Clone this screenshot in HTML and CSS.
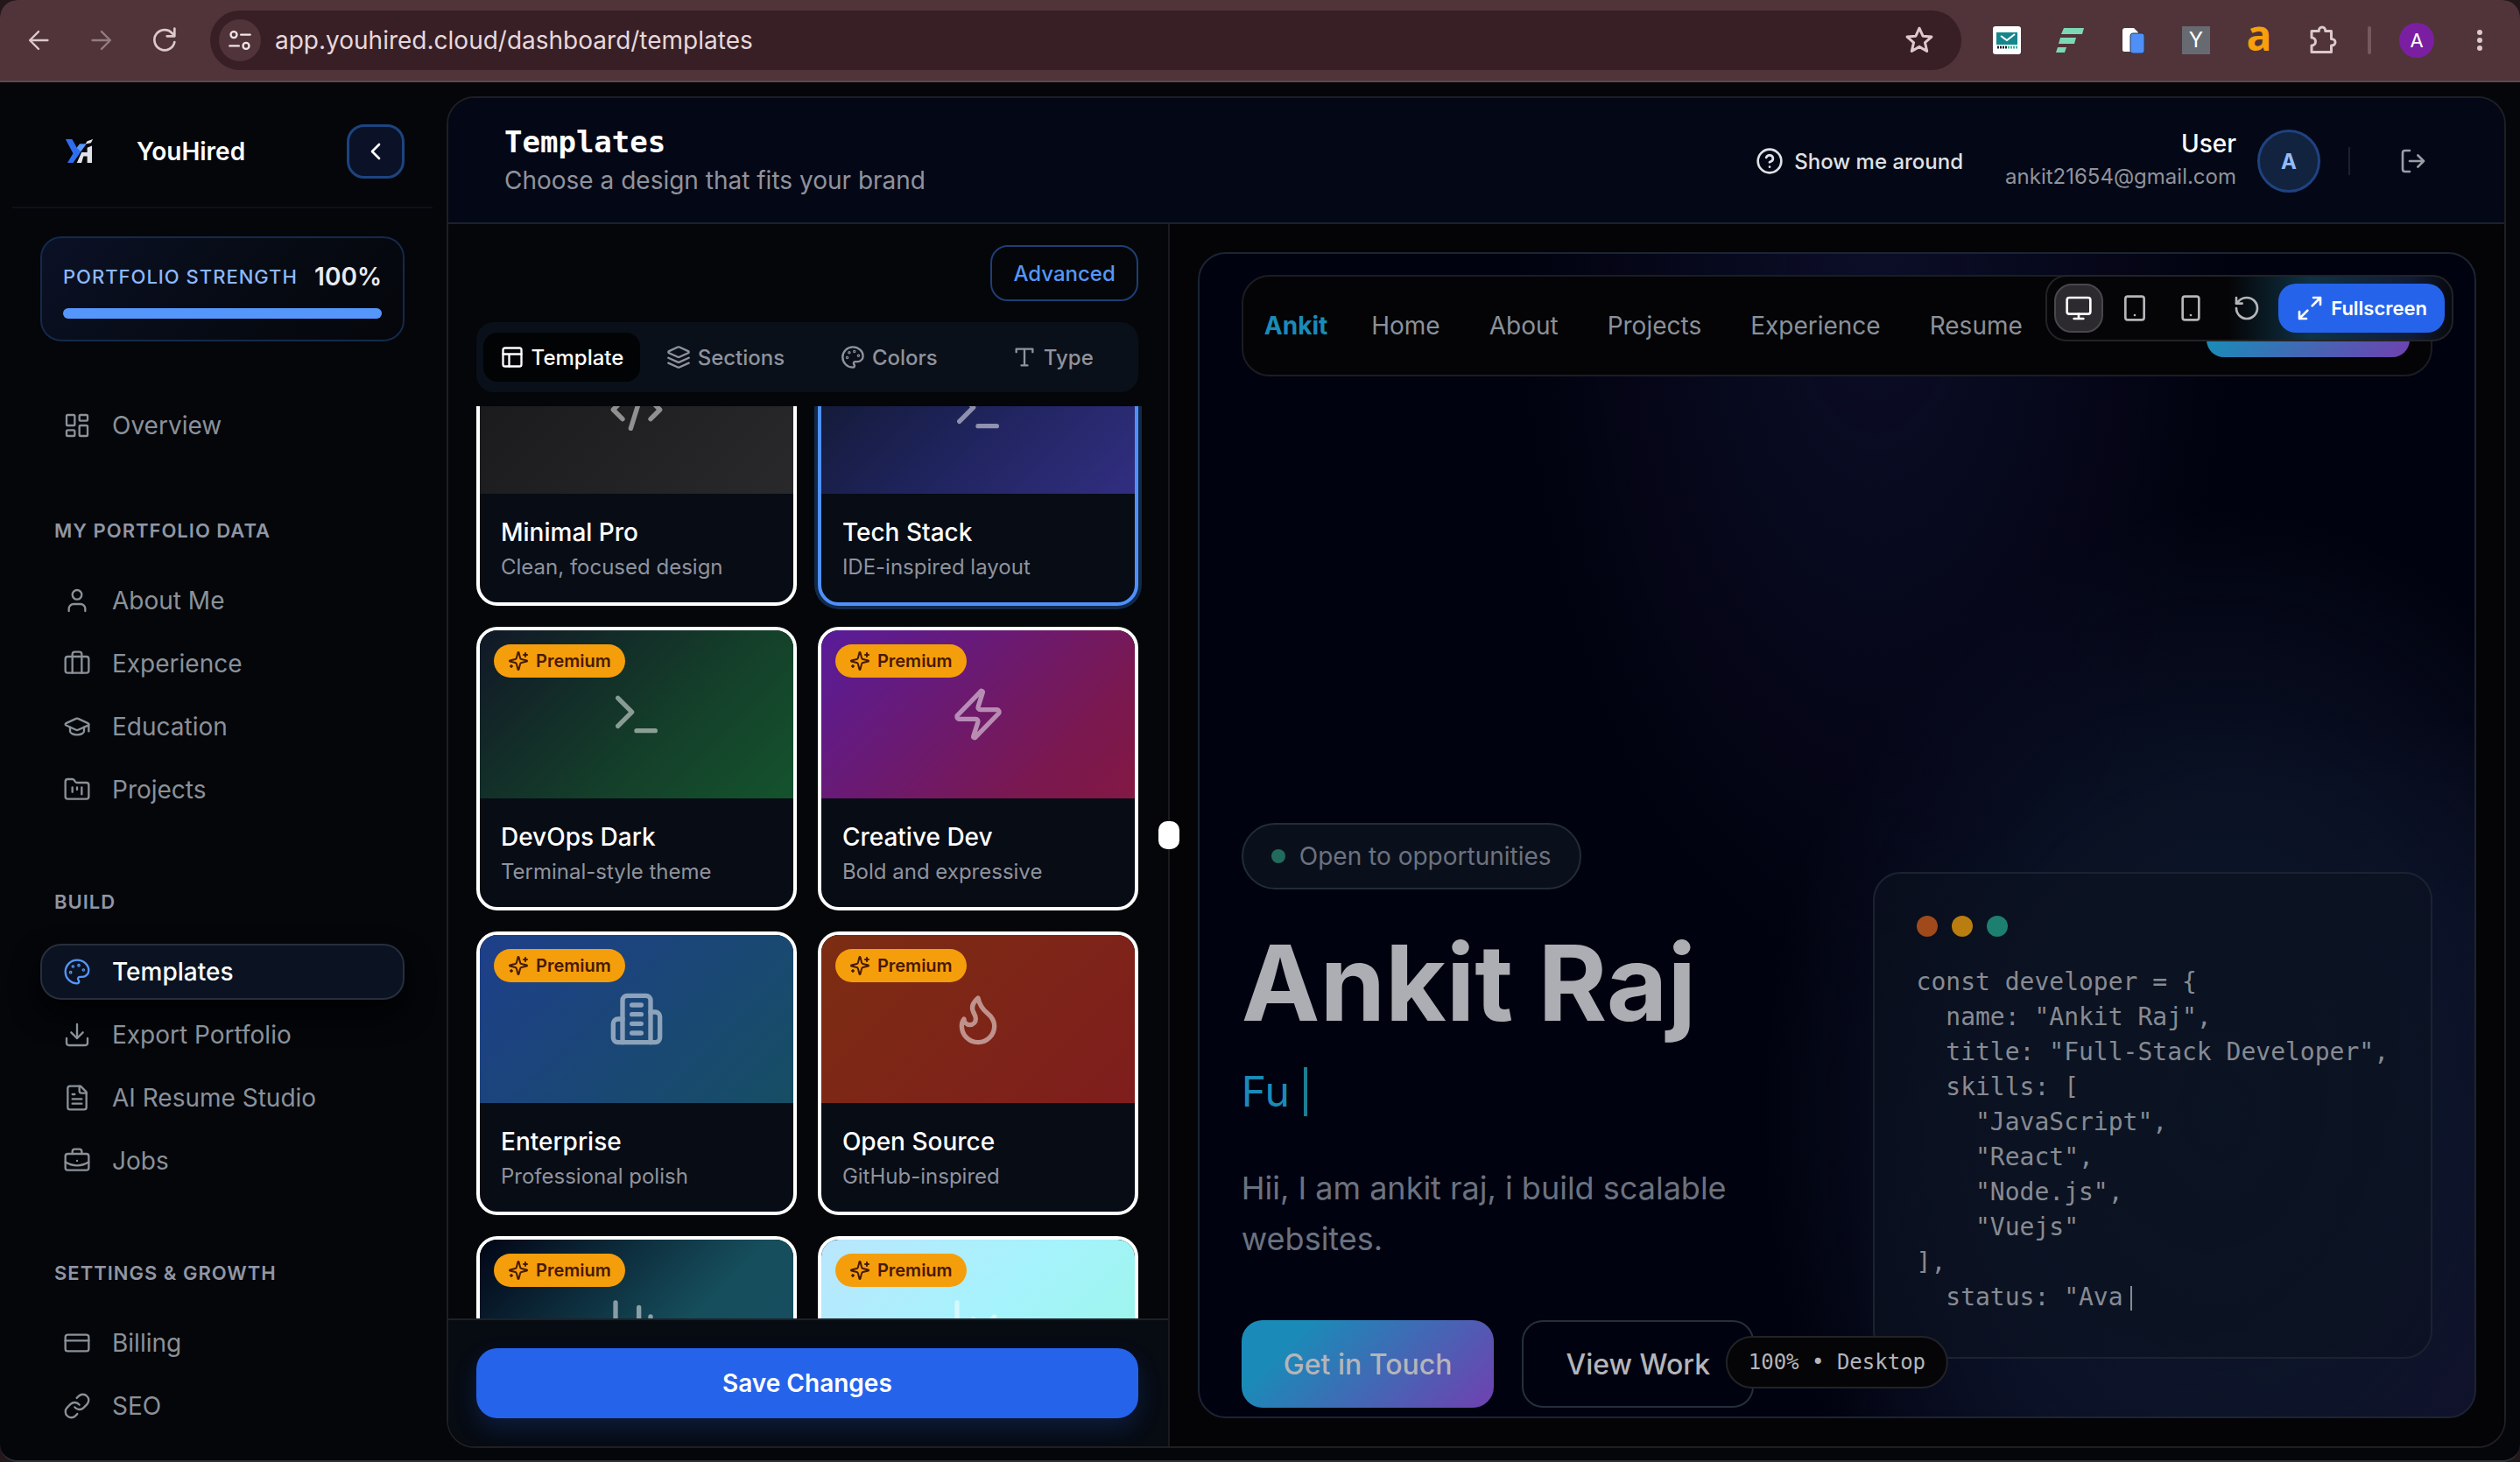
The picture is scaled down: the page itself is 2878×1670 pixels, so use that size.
FILE: index.html
```html
<!DOCTYPE html>
<html lang="en">
<head>
    <meta charset="UTF-8">
    <meta name="viewport" content="width=device-width, initial-scale=1.0">
    <title>YouHired - Templates</title>
    <link rel="stylesheet" href="styles.css">
</head>
<body>
    <!-- Icon sprite -->
    <svg class="sprite" aria-hidden="true">
        <symbol id="i-back" viewBox="0 0 24 24"><path d="M21 12H4M12 3.500l-8.500 8.500 8.500 8.500"/></symbol>
        <symbol id="i-forward" viewBox="0 0 24 24"><path d="M3 12h17M12 3.500l8.500 8.500-8.500 8.500"/></symbol>
        <symbol id="i-reload" viewBox="0 0 24 24"><path d="M20.500 13.500A8.700 8.700 0 1 1 18.500 6l2 2.500M20.500 2v6.500H14"/></symbol>
        <symbol id="i-tune" viewBox="0 0 24 24"><circle cx="6" cy="6.500" r="3"/><path d="M13 6.500h9M2 17.500h9"/><circle cx="18" cy="17.500" r="3"/></symbol>
        <symbol id="i-star" viewBox="0 0 24 24"><path d="M12 2.800l2.700 6 6.600.6-5 4.400 1.500 6.500L12 16.900l-5.800 3.400 1.500-6.500-5-4.400 6.600-.6z"/></symbol>
        <symbol id="i-puzzle" viewBox="0 0 24 24"><path d="M4 5h5.500c0-4 5-4 5 0H19v6c4 0 4 5 0 5v5H4v-5c4 0 4-6 0-6z"/></symbol>
        <symbol id="i-chevron-left" viewBox="0 0 24 24"><path d="m15 18-6-6 6-6"/></symbol>
        <symbol id="i-dashboard" viewBox="0 0 24 24"><rect x="3" y="3" width="7" height="9" rx="1"/><rect x="14" y="3" width="7" height="5" rx="1"/><rect x="14" y="12" width="7" height="9" rx="1"/><rect x="3" y="16" width="7" height="5" rx="1"/></symbol>
        <symbol id="i-user" viewBox="0 0 24 24"><path d="M19 21v-2a4 4 0 0 0-4-4H9a4 4 0 0 0-4 4v2"/><circle cx="12" cy="7" r="4"/></symbol>
        <symbol id="i-briefcase" viewBox="0 0 24 24"><path d="M16 20V4a2 2 0 0 0-2-2h-4a2 2 0 0 0-2 2v16"/><rect x="2" y="6" width="20" height="14" rx="2"/></symbol>
        <symbol id="i-cap" viewBox="0 0 24 24"><path d="M21.420 10.922a1 1 0 0 0-.019-1.838L12.830 5.180a2 2 0 0 0-1.660 0L2.600 9.080a1 1 0 0 0 0 1.832l8.570 3.908a2 2 0 0 0 1.660 0z"/><path d="M22 10v6"/><path d="M6 12.500V16a6 3 0 0 0 12 0v-3.500"/></symbol>
        <symbol id="i-folder" viewBox="0 0 24 24"><path d="M4 20h16a2 2 0 0 0 2-2V8a2 2 0 0 0-2-2h-7.930a2 2 0 0 1-1.660-.9l-.82-1.200A2 2 0 0 0 7.930 3H4a2 2 0 0 0-2 2v13c0 1.100.9 2 2 2Z"/><path d="M8 10v4M12 10v2M16 10v6"/></symbol>
        <symbol id="i-palette" viewBox="0 0 24 24"><path d="M12 2C6.500 2 2 6.500 2 12s4.500 10 10 10c.926 0 1.648-.746 1.648-1.688 0-.437-.18-.835-.437-1.125-.29-.289-.438-.652-.438-1.125a1.640 1.640 0 0 1 1.668-1.668h1.996c3.051 0 5.555-2.503 5.555-5.554C21.965 6.012 17.461 2 12 2z"/><circle cx="13.500" cy="6.500" r=".5"/><circle cx="17.500" cy="10.500" r=".5"/><circle cx="8.500" cy="7.500" r=".5"/><circle cx="6.500" cy="12.500" r=".5"/></symbol>
        <symbol id="i-download" viewBox="0 0 24 24"><path d="M12 15V3"/><path d="M21 15v4a2 2 0 0 1-2 2H5a2 2 0 0 1-2-2v-4"/><path d="m7 10 5 5 5-5"/></symbol>
        <symbol id="i-file" viewBox="0 0 24 24"><path d="M15 2H6a2 2 0 0 0-2 2v16a2 2 0 0 0 2 2h12a2 2 0 0 0 2-2V7Z"/><path d="M14 2v4a2 2 0 0 0 2 2h4M10 9H8M16 13H8M16 17H8"/></symbol>
        <symbol id="i-jobs" viewBox="0 0 24 24"><path d="M12 12h.01M16 6V4a2 2 0 0 0-2-2h-4a2 2 0 0 0-2 2v2M22 13a18.150 18.150 0 0 1-20 0"/><rect x="2" y="6" width="20" height="14" rx="2"/></symbol>
        <symbol id="i-card" viewBox="0 0 24 24"><rect x="2" y="5" width="20" height="14" rx="2"/><path d="M2 10h20"/></symbol>
        <symbol id="i-link" viewBox="0 0 24 24"><path d="M10 13a5 5 0 0 0 7.540.54l3-3a5 5 0 0 0-7.070-7.070l-1.720 1.710"/><path d="M14 11a5 5 0 0 0-7.540-.54l-3 3a5 5 0 0 0 7.070 7.070l1.710-1.710"/></symbol>
        <symbol id="i-help" viewBox="0 0 24 24"><circle cx="12" cy="12" r="10"/><path d="M9.090 9a3 3 0 0 1 5.830 1c0 2-3 3-3 3M12 17h.01"/></symbol>
        <symbol id="i-logout" viewBox="0 0 24 24"><path d="m16 17 5-5-5-5M21 12H9M9 21H5a2 2 0 0 1-2-2V5a2 2 0 0 1 2-2h4"/></symbol>
        <symbol id="i-layout" viewBox="0 0 24 24"><rect x="3" y="3" width="18" height="18" rx="2"/><path d="M3 9h18M9 21V9"/></symbol>
        <symbol id="i-layers" viewBox="0 0 24 24"><path d="M12.830 2.180a2 2 0 0 0-1.660 0L2.600 6.080a1 1 0 0 0 0 1.830l8.580 3.910a2 2 0 0 0 1.660 0l8.580-3.900a1 1 0 0 0 0-1.830Z"/><path d="m22 17.650-9.170 4.160a2 2 0 0 1-1.660 0L2 17.650M22 12.650l-9.170 4.160a2 2 0 0 1-1.660 0L2 12.650"/></symbol>
        <symbol id="i-type" viewBox="0 0 24 24"><path d="M4 7V4h16v3M9 20h6M12 4v16"/></symbol>
        <symbol id="i-code" viewBox="0 0 24 24"><path d="m18 16 4-4-4-4M6 8l-4 4 4 4M14.500 4l-5 16"/></symbol>
        <symbol id="i-terminal" viewBox="0 0 24 24"><path d="m4 17 6-6-6-6M12 19h8"/></symbol>
        <symbol id="i-zap" viewBox="0 0 24 24"><path d="M4 14a1 1 0 0 1-.78-1.630l9.900-10.200a.5.5 0 0 1 .86.46l-1.920 6.020A1 1 0 0 0 13 10h7a1 1 0 0 1 .78 1.630l-9.900 10.200a.5.5 0 0 1-.86-.46l1.920-6.020A1 1 0 0 0 11 14z"/></symbol>
        <symbol id="i-building" viewBox="0 0 24 24"><path d="M6 22V4a2 2 0 0 1 2-2h8a2 2 0 0 1 2 2v18Z"/><path d="M6 12H4a2 2 0 0 0-2 2v6a2 2 0 0 0 2 2h2M18 9h2a2 2 0 0 1 2 2v9a2 2 0 0 1-2 2h-2M10 6h4M10 10h4M10 14h4M10 18h4"/></symbol>
        <symbol id="i-flame" viewBox="0 0 24 24"><path d="M8.500 14.500A2.500 2.500 0 0 0 11 12c0-1.380-.5-2-1-3-1.072-2.143-.224-4.054 2-6 .5 2.500 2 4.900 4 6.500 2 1.600 3 3.500 3 5.500a7 7 0 1 1-14 0c0-1.153.433-2.294 1-3a2.500 2.500 0 0 0 2.500 2.500z"/></symbol>
        <symbol id="i-chart" viewBox="0 0 24 24"><path d="M3 3v16a2 2 0 0 0 2 2h16M18 17V9M13 17V5M8 17v-3"/></symbol>
        <symbol id="i-line" viewBox="0 0 24 24"><path d="M3 3v16a2 2 0 0 0 2 2h16M19 9l-5 5-4-4-3 3"/></symbol>
        <symbol id="i-sparkles" viewBox="0 0 24 24"><path d="M9.937 15.500A2 2 0 0 0 8.500 14.063l-6.135-1.582a.5.5 0 0 1 0-.962L8.500 9.936A2 2 0 0 0 9.937 8.500l1.582-6.135a.5.5 0 0 1 .963 0L14.063 8.500A2 2 0 0 0 15.500 9.937l6.135 1.581a.5.5 0 0 1 0 .964L15.500 14.063a2 2 0 0 0-1.437 1.437l-1.582 6.135a.5.5 0 0 1-.963 0zM20 3v4M22 5h-4M4 17v2M5 18H3"/></symbol>
        <symbol id="i-monitor" viewBox="0 0 24 24"><rect x="2" y="3" width="20" height="14" rx="2"/><path d="M8 21h8M12 17v4"/></symbol>
        <symbol id="i-tablet" viewBox="0 0 24 24"><rect x="4" y="2" width="16" height="20" rx="2"/><path d="M12 18h.01"/></symbol>
        <symbol id="i-phone" viewBox="0 0 24 24"><rect x="5" y="2" width="14" height="20" rx="2"/><path d="M12 18h.01"/></symbol>
        <symbol id="i-reset" viewBox="0 0 24 24"><path d="M3 12a9 9 0 1 0 9-9 9.750 9.750 0 0 0-6.740 2.740L3 8"/><path d="M3 3v5h5"/></symbol>
        <symbol id="i-expand" viewBox="0 0 24 24"><path d="M15 3h6v6M21 3l-7 7M3 21l7-7M9 21H3v-6"/></symbol>
    </svg>

    <div class="window">
        <!-- Browser toolbar -->
        <div class="browser-bar">
            <button class="bar-btn" aria-label="Back"><svg class="icon icon-28"><use href="#i-back"/></svg></button>
            <button class="bar-btn dim" aria-label="Forward"><svg class="icon icon-28"><use href="#i-forward"/></svg></button>
            <button class="bar-btn" aria-label="Reload"><svg class="icon icon-32"><use href="#i-reload"/></svg></button>
            <div class="url-bar">
                <button class="site-info" aria-label="Site information"><svg class="icon icon-28"><use href="#i-tune"/></svg></button>
                <input class="url-input" type="text" aria-label="Address" value="app.youhired.cloud/dashboard/templates">
                <button class="star-btn" aria-label="Bookmark"><svg class="icon icon-36"><use href="#i-star"/></svg></button>
            </div>
            <button class="bar-btn" aria-label="Temp Mail">
                <svg class="icon-32" viewBox="0 0 32 32"><rect width="32" height="32" rx="3" fill="#fff"/><rect x="4" y="7" width="24" height="14" fill="#15868c"/><path d="M9 11l7 5 9-7" fill="none" stroke="#fff" stroke-width="2"/><path d="M5 24h12" stroke="#222" stroke-width="3" stroke-dasharray="2 1"/><path d="M17 24h11" stroke="#3bb79a" stroke-width="3" stroke-dasharray="2 1"/></svg>
            </button>
            <button class="bar-btn" aria-label="Form filler">
                <svg class="icon-32" viewBox="0 0 32 32" fill="#7dd8b5"><path d="M9 2h23l-2 7H6zM5 13h18l-2 7H3zM2 24h10l-2 6H0z"/></svg>
            </button>
            <button class="bar-btn" aria-label="Copy tool">
                <svg class="icon-32" viewBox="0 0 32 32"><path d="M4 5a3 3 0 0 1 3-3h10l5 5v22H6a2 2 0 0 1-2-2z" fill="#fff"/><rect x="13" y="8" width="16" height="23" rx="3" fill="#4f8ff7" stroke="#2b3d57" stroke-width="1"/></svg>
            </button>
            <button class="bar-btn" aria-label="Y extension"><span class="ext-y">Y</span></button>
            <button class="bar-btn" aria-label="a extension"><span class="ext-a">a</span></button>
            <button class="bar-btn" aria-label="Extensions"><svg class="icon icon-36"><use href="#i-puzzle"/></svg></button>
            <span class="bar-divider"></span>
            <button class="bar-btn" aria-label="Profile"><span class="profile">A</span></button>
            <button class="bar-btn" aria-label="Menu"><svg class="icon-28" viewBox="0 0 28 28" fill="#dcc8cd"><circle cx="14" cy="5" r="3"/><circle cx="14" cy="14" r="3"/><circle cx="14" cy="23" r="3"/></svg></button>
        </div>

        <div class="app">
            <aside class="sidebar">
                <div class="brand">
                    <svg class="logo" viewBox="0 0 30 26" aria-hidden="true">
                        <path d="M0 0h7l5 9 3-4h7L8 25H2l6-10z" fill="#2f6df0"/>
                        <path d="M12 9l3-4h7l-6 8z" fill="#5b9bf8"/>
                        <path d="M17 14h6v-5l5-2v18h-5v-7h-4l-2 7h-5zM23 2l6-2-2 4-6 1z" fill="#dfe2ea"/>
                    </svg>
                    <span class="brand-name">YouHired</span>
                    <button class="collapse" aria-label="Collapse sidebar"><svg class="icon icon-32"><use href="#i-chevron-left"/></svg></button>
                </div>

                <div class="sidebar-body">
                    <div class="strength">
                        <div class="strength-row">
                            <span class="strength-label">PORTFOLIO STRENGTH</span>
                            <span class="strength-value">100%</span>
                        </div>
                        <div class="strength-bar"><div class="strength-fill" style="width: 100%"></div></div>
                    </div>

                    <nav class="nav">
                        <a href="#" class="nav-item"><svg class="icon icon-32"><use href="#i-dashboard"/></svg>Overview</a>

                        <h2 class="nav-title first">MY PORTFOLIO DATA</h2>
                        <a href="#" class="nav-item"><svg class="icon icon-32"><use href="#i-user"/></svg>About Me</a>
                        <a href="#" class="nav-item"><svg class="icon icon-32"><use href="#i-briefcase"/></svg>Experience</a>
                        <a href="#" class="nav-item"><svg class="icon icon-32"><use href="#i-cap"/></svg>Education</a>
                        <a href="#" class="nav-item"><svg class="icon icon-32"><use href="#i-folder"/></svg>Projects</a>

                        <h2 class="nav-title">BUILD</h2>
                        <a href="#" class="nav-item active"><svg class="icon icon-32"><use href="#i-palette"/></svg>Templates</a>
                        <a href="#" class="nav-item"><svg class="icon icon-32"><use href="#i-download"/></svg>Export Portfolio</a>
                        <a href="#" class="nav-item"><svg class="icon icon-32"><use href="#i-file"/></svg>AI Resume Studio</a>
                        <a href="#" class="nav-item"><svg class="icon icon-32"><use href="#i-jobs"/></svg>Jobs</a>

                        <h2 class="nav-title">SETTINGS &amp; GROWTH</h2>
                        <a href="#" class="nav-item"><svg class="icon icon-32"><use href="#i-card"/></svg>Billing</a>
                        <a href="#" class="nav-item"><svg class="icon icon-32"><use href="#i-link"/></svg>SEO</a>
                    </nav>
                </div>
            </aside>

            <main class="main">
                <header class="header">
                    <div class="header-text">
                        <h1>Templates</h1>
                        <p>Choose a design that fits your brand</p>
                    </div>
                    <button class="tour"><svg class="icon icon-32"><use href="#i-help"/></svg>Show me around</button>
                    <div class="user">
                        <div class="user-text">
                            <span class="user-name">User</span>
                            <span class="user-mail">ankit21654@gmail.com</span>
                        </div>
                        <span class="avatar">A</span>
                    </div>
                    <span class="header-divider"></span>
                    <button class="logout" aria-label="Log out"><svg class="icon icon-32"><use href="#i-logout"/></svg></button>
                </header>

                <div class="workspace">
                    <section class="editor">
                        <div class="editor-top">
                            <button class="advanced">Advanced</button>
                            <div class="tabs">
                                <button class="tab active"><svg class="icon icon-28"><use href="#i-layout"/></svg>Template</button>
                                <button class="tab"><svg class="icon icon-28"><use href="#i-layers"/></svg>Sections</button>
                                <button class="tab"><svg class="icon icon-28"><use href="#i-palette"/></svg>Colors</button>
                                <button class="tab"><svg class="icon icon-28"><use href="#i-type"/></svg>Type</button>
                            </div>
                        </div>

                        <div class="template-list">
                            <div class="template-grid">
                                <article class="card">
                                    <div class="thumb minimal"><svg class="icon icon-64"><use href="#i-code"/></svg></div>
                                    <div class="card-body"><h3>Minimal Pro</h3><p>Clean, focused design</p></div>
                                </article>
                                <article class="card selected">
                                    <div class="thumb tech"><svg class="icon icon-64"><use href="#i-terminal"/></svg></div>
                                    <div class="card-body"><h3>Tech Stack</h3><p>IDE-inspired layout</p></div>
                                </article>
                                <article class="card">
                                    <div class="thumb devops"><svg class="icon icon-64"><use href="#i-terminal"/></svg></div>
                                    <span class="premium"><svg class="icon icon-24"><use href="#i-sparkles"/></svg>Premium</span>
                                    <div class="card-body"><h3>DevOps Dark</h3><p>Terminal-style theme</p></div>
                                </article>
                                <article class="card">
                                    <div class="thumb creative"><svg class="icon icon-64"><use href="#i-zap"/></svg></div>
                                    <span class="premium"><svg class="icon icon-24"><use href="#i-sparkles"/></svg>Premium</span>
                                    <div class="card-body"><h3>Creative Dev</h3><p>Bold and expressive</p></div>
                                </article>
                                <article class="card">
                                    <div class="thumb enterprise"><svg class="icon icon-64"><use href="#i-building"/></svg></div>
                                    <span class="premium"><svg class="icon icon-24"><use href="#i-sparkles"/></svg>Premium</span>
                                    <div class="card-body"><h3>Enterprise</h3><p>Professional polish</p></div>
                                </article>
                                <article class="card">
                                    <div class="thumb opensource"><svg class="icon icon-64"><use href="#i-flame"/></svg></div>
                                    <span class="premium"><svg class="icon icon-24"><use href="#i-sparkles"/></svg>Premium</span>
                                    <div class="card-body"><h3>Open Source</h3><p>GitHub-inspired</p></div>
                                </article>
                                <article class="card">
                                    <div class="thumb data"><svg class="icon icon-64"><use href="#i-chart"/></svg></div>
                                    <span class="premium"><svg class="icon icon-24"><use href="#i-sparkles"/></svg>Premium</span>
                                </article>
                                <article class="card">
                                    <div class="thumb light"><svg class="icon icon-64"><use href="#i-line"/></svg></div>
                                    <span class="premium"><svg class="icon icon-24"><use href="#i-sparkles"/></svg>Premium</span>
                                </article>
                            </div>
                        </div>

                        <div class="save-bar">
                            <button class="save">Save Changes</button>
                        </div>
                    </section>

                    <div class="splitter"><span class="grip"></span></div>

                    <section class="stage">
                        <div class="preview">
                            <nav class="site-nav">
                                <a href="#" class="site-logo">Ankit</a>
                                <a href="#">Home</a>
                                <a href="#">About</a>
                                <a href="#">Projects</a>
                                <a href="#">Experience</a>
                                <a href="#">Resume</a>
                                <span class="site-cta"></span>
                            </nav>

                            <div class="hero">
                                <div class="hero-text">
                                    <span class="status"><span class="status-dot"></span>Open to opportunities</span>
                                    <h2>Ankit Raj</h2>
                                    <div class="typed">Fu<span class="cursor"></span></div>
                                    <p>Hii, I am ankit raj, i build scalable websites.</p>
                                    <div class="hero-actions">
                                        <a href="#" class="hero-btn primary">Get in Touch</a>
                                        <a href="#" class="hero-btn">View Work</a>
                                    </div>
                                </div>
                                <div class="code-card">
                                    <div class="dots"><span class="dot red"></span><span class="dot amber"></span><span class="dot green"></span></div>
<pre>const developer = {
  name: "Ankit Raj",
  title: "Full-Stack Developer",
  skills: [
    "JavaScript",
    "React",
    "Node.js",
    "Vuejs"
],
  status: "Ava<span class="code-cursor"></span></pre>
                                </div>
                            </div>

                            <div class="device-bar">
                                <button class="device active" aria-label="Desktop"><svg class="icon icon-32"><use href="#i-monitor"/></svg></button>
                                <button class="device" aria-label="Tablet"><svg class="icon icon-32"><use href="#i-tablet"/></svg></button>
                                <button class="device" aria-label="Mobile"><svg class="icon icon-32"><use href="#i-phone"/></svg></button>
                                <button class="device" aria-label="Reset"><svg class="icon icon-32"><use href="#i-reset"/></svg></button>
                                <button class="fullscreen"><svg class="icon icon-32"><use href="#i-expand"/></svg>Fullscreen</button>
                            </div>
                            <div class="zoom-pill">100% • Desktop</div>
                        </div>
                    </section>
                </div>
            </main>
        </div>
    </div>
</body>
</html>
```
FILE: styles.css
```css
* {
    box-sizing: border-box;
    margin: 0;
    padding: 0;
}
body {
    font-family: Inter, "Liberation Sans", sans-serif;
    font-size: 28px;
    color: #fff;
    background: #23171a;
    height: 100vh;
    overflow: hidden;
}
button, input {
    font: inherit;
    color: inherit;
    background: none;
    border: none;
}
button {
    cursor: pointer;
}
a {
    color: inherit;
    text-decoration: none;
}
.sprite {
    display: none;
}
.icon {
    fill: none;
    stroke: currentColor;
    stroke-width: 2;
    stroke-linecap: round;
    stroke-linejoin: round;
    flex: none;
}
.icon-24 { width: 24px; height: 24px; }
.icon-28 { width: 28px; height: 28px; }
.icon-32 { width: 32px; height: 32px; }
.icon-36 { width: 36px; height: 36px; }
.icon-64 { width: 64px; height: 64px; }

.window {
    display: flex;
    flex-direction: column;
    height: 100vh;
    background: #04060a;
    border-bottom: 2px solid #303238;
    border-radius: 20px;
    overflow: hidden;
}

/* Browser toolbar */
.browser-bar {
    display: flex;
    align-items: center;
    flex: none;
    height: 94px;
    padding: 0 10px 0 8px;
    background: #503439;
    border-bottom: 2px solid #5a4a4e;
    color: #dcc8cd;
}
.bar-btn {
    width: 72px;
    height: 72px;
    display: flex;
    align-items: center;
    justify-content: center;
}
.bar-btn.dim {
    color: #927c80;
}
.url-bar {
    flex: 1;
    height: 68px;
    margin: 0 16px;
    padding: 0 24px 0 10px;
    display: flex;
    align-items: center;
    gap: 16px;
    background: #371f25;
    border-radius: 34px;
}
.site-info {
    width: 48px;
    height: 48px;
    border-radius: 50%;
    background: #503439;
    color: #f0e4e7;
    display: flex;
    align-items: center;
    justify-content: center;
}
.url-input {
    flex: 1;
    color: #e6d8dc;
    outline: none;
}
.star-btn {
    width: 48px;
    height: 48px;
    display: flex;
    align-items: center;
    justify-content: center;
}
.ext-y {
    width: 32px;
    height: 32px;
    line-height: 32px;
    font-size: 24px;
    background: #686a72;
    color: #fff;
}
.ext-a {
    font-family: "Open Sans", sans-serif;
    font-size: 48px;
    font-weight: 700;
    line-height: 32px;
    padding-bottom: 12px;
    color: #f79f0d;
}
.bar-divider {
    width: 4px;
    height: 32px;
    margin: 0 16px;
    background: #76595f;
    border-radius: 2px;
}
.profile {
    width: 40px;
    height: 40px;
    line-height: 40px;
    border-radius: 50%;
    background: #7b1fa2;
    color: #fff;
    font-size: 22px;
}

/* App layout */
.app {
    flex: 1;
    display: flex;
    min-height: 0;
}
.sidebar {
    width: 510px;
    flex: none;
    overflow: hidden;
}
.brand {
    display: flex;
    align-items: center;
    gap: 20px;
    margin: 0 16px 0 14px;
    padding: 48px 32px 32px;
    border-bottom: 2px solid #0c111b;
}
.logo {
    width: 90px;
    height: 28px;
}
.brand-name {
    flex: 1;
    font-weight: 600;
}
.collapse {
    width: 66px;
    height: 62px;
    border: 3px solid #1c4480;
    border-radius: 20px;
    background: #0b1126;
    display: flex;
    align-items: center;
    justify-content: center;
}
.sidebar-body {
    padding: 32px 48px 0 46px;
}
.strength {
    padding: 24px;
    border: 2px solid #142a4a;
    border-radius: 24px;
    background: linear-gradient(135deg, #0b1126, #060a12 60%, #04060a);
}
.strength-row {
    display: flex;
    justify-content: space-between;
    align-items: center;
    height: 40px;
    margin-bottom: 16px;
}
.strength-label {
    font-size: 22px;
    font-weight: 500;
    letter-spacing: 1px;
    color: #8fb8fa;
}
.strength-value {
    font-weight: 600;
    color: #e8eaf0;
}
.strength-bar {
    height: 12px;
    border-radius: 6px;
    background: #111827;
}
.strength-fill {
    height: 100%;
    border-radius: 6px;
    background: #5596fb;
}
.nav {
    display: flex;
    flex-direction: column;
    gap: 8px;
    padding-top: 64px;
}
.nav-item {
    display: flex;
    align-items: center;
    gap: 24px;
    height: 64px;
    padding: 0 24px;
    border: 2px solid transparent;
    border-radius: 24px;
    color: #8b9199;
}
.nav-item .icon {
    stroke-width: 1.75;
}
.nav-item.active {
    color: #fff;
    font-weight: 500;
    background: #0b1322;
    border-color: #272f3c;
    box-shadow: 0 16px 32px #020203;
}
.nav-item.active .icon {
    color: #5596fb;
}
.nav-title {
    margin: 72px 0 24px;
    padding-left: 16px;
    font-size: 22px;
    font-weight: 600;
    line-height: 32px;
    letter-spacing: 1px;
    color: #9096a5;
}
.nav-title.first {
    margin-top: 64px;
}

.main {
    flex: 1;
    min-width: 0;
    display: flex;
    flex-direction: column;
    margin: 16px 16px 14px 0;
    border: 2px solid #1e1f24;
    border-radius: 32px;
    overflow: hidden;
}
.header {
    display: flex;
    align-items: center;
    flex: none;
    height: 144px;
    padding: 2px 64px 0;
    background: #040816;
    border-bottom: 2px solid #1a2230;
}
.header-text {
    flex: 1;
}
.header h1 {
    font-family: "DejaVu Sans Mono", "Liberation Mono", monospace;
    font-size: 34px;
    line-height: 44px;
}
.header p {
    line-height: 44px;
    color: #8f939d;
}
.tour {
    display: flex;
    align-items: center;
    gap: 12px;
    margin-right: 48px;
    font-size: 24px;
    font-weight: 500;
    color: #dfe1e6;
}
.user {
    display: flex;
    align-items: center;
    gap: 24px;
}
.user-text {
    display: flex;
    flex-direction: column;
    padding-bottom: 4px;
    text-align: right;
}
.user-name {
    font-weight: 500;
    line-height: 40px;
}
.user-mail {
    font-size: 24px;
    line-height: 36px;
    color: #8f939d;
}
.avatar {
    width: 72px;
    height: 72px;
    border: 3px solid #1f4280;
    border-radius: 50%;
    background: #11233f;
    color: #93bbfc;
    font-size: 24px;
    font-weight: 700;
    display: flex;
    align-items: center;
    justify-content: center;
}
.header-divider {
    width: 2px;
    height: 32px;
    margin: 0 32px;
    background: #1c2230;
}
.logout {
    width: 80px;
    height: 64px;
    color: #9a9da6;
    display: flex;
    align-items: center;
    justify-content: center;
}

/* Template editor */
.workspace {
    flex: 1;
    display: flex;
    min-height: 0;
}
.editor {
    width: 35%;
    flex: none;
    display: flex;
    flex-direction: column;
    background: #040609;
}
.editor-top {
    display: flex;
    flex-direction: column;
    gap: 24px;
    padding: 24px 34px 16px 32px;
}
.advanced {
    align-self: flex-end;
    height: 64px;
    padding: 0 24px;
    border: 2px solid #1e3f74;
    border-radius: 20px;
    color: #5596fb;
    font-size: 24px;
    font-weight: 500;
}
.tabs {
    display: grid;
    grid-template-columns: repeat(4, 1fr);
    gap: 8px;
    padding: 12px 8px;
    background: #0a1019;
    border-radius: 20px;
}
.tab {
    height: 56px;
    display: flex;
    align-items: center;
    justify-content: center;
    gap: 8px;
    border-radius: 16px;
    color: #8f939d;
    font-size: 24px;
    font-weight: 500;
}
.tab.active {
    background: #020305;
    color: #fff;
}
.template-list {
    flex: 1;
    min-height: 0;
    padding: 0 34px 0 32px;
    overflow: hidden;
}
/* list is shown scrolled part of the first row */
.template-grid {
    display: grid;
    grid-template-columns: repeat(2, 1fr);
    gap: 24px;
    margin-top: -96px;
}
.card {
    position: relative;
    border: 4px solid #fff;
    border-radius: 24px;
    background: #070c15;
    overflow: hidden;
}
.card.selected {
    border-color: #4f91fb;
    box-shadow: 0 0 0 4px #12294a;
}
.thumb {
    height: 192px;
    display: flex;
    align-items: center;
    justify-content: center;
}
.thumb .icon {
    opacity: 0.5;
}
.thumb.minimal { background: linear-gradient(135deg, #18181b, #29292c); }
.thumb.tech { background: linear-gradient(135deg, #0f172a, #1e235a 50%, #312e81); }
.thumb.devops { background: linear-gradient(135deg, #111827, #14402a 60%, #14532d); }
.thumb.creative { background: linear-gradient(135deg, #581c9a, #7a1850 75%, #831843); }
.thumb.enterprise { background: linear-gradient(135deg, #1e3f8a, #164e63); }
.thumb.opensource { background: linear-gradient(135deg, #7c2d12, #7f1d1d); }
.thumb.data { background: linear-gradient(135deg, #020617, #164e5c 60%, #164e63); }
.thumb.light { background: linear-gradient(135deg, #bae6fd, #a5f3fc 50%, #99f6e4); }
.card-body {
    padding: 24px 24px 20px;
}
.card-body h3 {
    font-size: 28px;
    font-weight: 500;
    line-height: 40px;
}
.card-body p {
    font-size: 24px;
    line-height: 40px;
    color: #8f939d;
}
.premium {
    position: absolute;
    top: 16px;
    left: 16px;
    display: flex;
    align-items: center;
    gap: 8px;
    height: 38px;
    padding: 0 16px;
    border-radius: 19px;
    background: #f59e0b;
    color: #451a03;
    font-size: 20px;
    font-weight: 600;
}
.save-bar {
    padding: 32px 34px 32px 32px;
    border-top: 2px solid #1e2129;
    background: #070b12;
}
.save {
    width: 100%;
    height: 80px;
    border-radius: 24px;
    background: #2563eb;
    font-weight: 600;
    box-shadow: 0 12px 28px rgba(37, 99, 235, 0.2);
}
.splitter {
    position: relative;
    width: 2px;
    background: #1a1b20;
}
.grip {
    position: absolute;
    top: 50%;
    left: 50%;
    width: 24px;
    height: 32px;
    transform: translate(-50%, -50%);
    border-radius: 10px;
    background: #fff;
}

/* Live preview */
.stage {
    flex: 1;
    min-width: 0;
    padding: 32px;
    background: #040406;
}
.preview {
    position: relative;
    height: 100%;
    display: flex;
    flex-direction: column;
    justify-content: space-between;
    padding: 24px 48px 10px;
    border: 2px solid #1a2433;
    border-radius: 32px;
    overflow: hidden;
    background:
        radial-gradient(ellipse 28% 62% at 53% 0%, #0c0e28 0%, transparent 100%),
        radial-gradient(ellipse 36% 52% at 80% 74%, #0c1728 0%, rgba(11, 20, 40, 0.8) 55%, transparent 100%),
        radial-gradient(ellipse 44% 52% at 94% 92%, #17112f 0%, #100f2b 50%, transparent 100%),
        #01020f;
}
.site-nav {
    display: flex;
    align-items: center;
    gap: 56px;
    height: 116px;
    padding: 0 24px;
    border: 2px solid #1b1d22;
    border-radius: 32px;
    background: #040406;
    color: #8b9199;
}
.site-logo {
    margin-right: -6px;
    font-weight: 700;
    color: #1a8bb8;
}
.site-cta {
    width: 232px;
    height: 72px;
    margin-left: auto;
    border-radius: 20px;
    background: linear-gradient(135deg, #1a8bb8 20%, #7040b0);
}
.hero {
    display: grid;
    grid-template-columns: 1fr 1fr;
    align-items: center;
    gap: 96px;
}
.status {
    display: inline-flex;
    align-items: center;
    gap: 16px;
    height: 76px;
    padding: 0 32px;
    border: 2px solid #222c38;
    border-radius: 38px;
    background: #0a101b;
    color: #6b7280;
}
.status-dot {
    width: 16px;
    height: 16px;
    border-radius: 50%;
    background: #226a5c;
}
.hero h2 {
    margin-top: 32px;
    font-size: 120px;
    font-weight: 700;
    line-height: 150px;
    color: #adaeb3;
}
.typed {
    display: flex;
    align-items: center;
    gap: 16px;
    margin-top: 16px;
    font-size: 48px;
    line-height: 66px;
    color: #1a8bb8;
}
.cursor {
    width: 4px;
    height: 56px;
    background: #1b7f92;
}
.hero p {
    margin-top: 48px;
    font-size: 36px;
    line-height: 58px;
    color: #6b7280;
}
.hero-actions {
    display: flex;
    gap: 32px;
    margin-top: 64px;
}
.hero-btn {
    height: 100px;
    padding: 0 48px;
    display: flex;
    align-items: center;
    border: 2px solid #252f3e;
    border-radius: 24px;
    font-size: 32px;
    font-weight: 500;
    color: #b4b5ba;
}
.hero-btn.primary {
    border: none;
    background: linear-gradient(135deg, #1a8bb8 20%, #7040b0);
}
.code-card {
    padding: 48px;
    border: 2px solid #1b2331;
    border-radius: 32px;
    background: rgba(12, 18, 32, 0.6);
}
.dots {
    display: flex;
    gap: 16px;
    margin-bottom: 32px;
}
.dot {
    width: 24px;
    height: 24px;
    border-radius: 50%;
}
.dot.red { background: #a04a1c; }
.dot.amber { background: #b97d10; }
.dot.green { background: #1d7f70; }
.code-card pre {
    font-family: "DejaVu Sans Mono", "Liberation Mono", monospace;
    font-size: 28px;
    line-height: 40px;
    color: #878b93;
}
.code-cursor {
    display: inline-block;
    width: 2px;
    height: 28px;
    margin-left: 8px;
    background: #878b93;
    vertical-align: middle;
}
.device-bar {
    position: absolute;
    top: 24px;
    right: 24px;
    display: flex;
    gap: 8px;
    padding: 8px;
    border: 2px solid #222327;
    border-radius: 24px;
    background: linear-gradient(90deg, #050507 45%, #0e3346 65%, #101c38 90%, #08090f);
}
.device {
    width: 56px;
    height: 56px;
    border-radius: 20px;
    color: #b5b5ba;
    display: flex;
    align-items: center;
    justify-content: center;
}
.device.active {
    background: #2c2a2e;
    border: 2px solid #4a474c;
    color: #fff;
}
.fullscreen {
    display: flex;
    align-items: center;
    gap: 8px;
    padding: 0 20px;
    border-radius: 20px;
    background: #2563eb;
    font-size: 22px;
    font-weight: 600;
}
.zoom-pill {
    position: absolute;
    bottom: 32px;
    left: 50%;
    transform: translateX(-50%);
    padding: 0 24px;
    border: 2px solid #222327;
    border-radius: 30px;
    background: #050507;
    font-family: "DejaVu Sans Mono", "Liberation Mono", monospace;
    font-size: 24px;
    line-height: 56px;
    color: #b5b5ba;
}
```
